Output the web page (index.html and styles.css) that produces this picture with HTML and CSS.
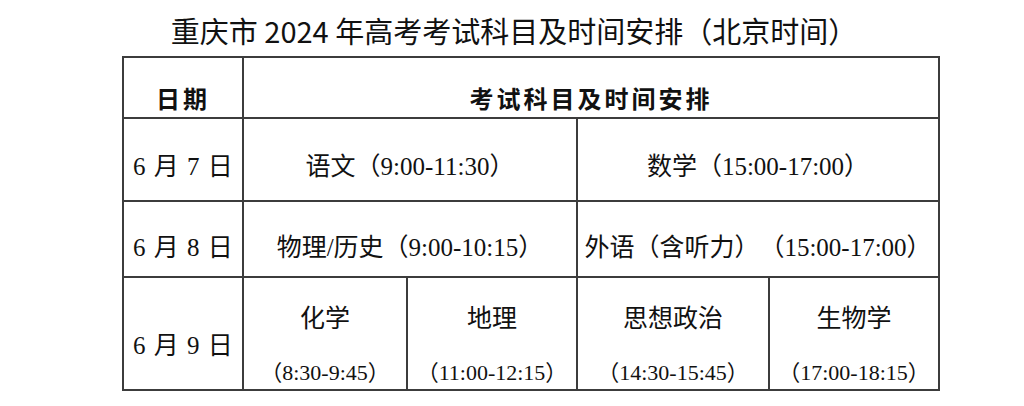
FILE: index.html
```html
<!DOCTYPE html>
<html lang="zh-CN">
<head>
<meta charset="utf-8">
<title>重庆市2024年高考考试科目及时间安排</title>
<link rel="stylesheet" href="styles.css">
</head>
<body>
<div class="page">
  <h1 class="title">重庆市 2024 年高考考试科目及时间安排（北京时间）</h1>
  <div class="table-wrap">
    <table class="schedule">
      <colgroup>
        <col class="c-date">
        <col class="c-a">
        <col class="c-b">
        <col class="c-c">
        <col class="c-d">
      </colgroup>
      <tr class="r-head">
        <th>日期</th>
        <th colspan="4">考试科目及时间安排</th>
      </tr>
      <tr class="r-1">
        <td class="date">6 月 7 日</td>
        <td colspan="2">语文（9:00-11:30）</td>
        <td colspan="2">数学（15:00-17:00）</td>
      </tr>
      <tr class="r-2">
        <td class="date">6 月 8 日</td>
        <td colspan="2">物理/历史（9:00-10:15）</td>
        <td colspan="2">外语（含听力）　（15:00-17:00）</td>
      </tr>
      <tr class="r-3">
        <td class="date">6 月 9 日</td>
        <td class="split"><div class="subj">化学</div><div class="time">（8:30-9:45）</div></td>
        <td class="split"><div class="subj">地理</div><div class="time">（11:00-12:15）</div></td>
        <td class="split"><div class="subj">思想政治</div><div class="time">（14:30-15:45）</div></td>
        <td class="split"><div class="subj">生物学</div><div class="time">（17:00-18:15）</div></td>
      </tr>
    </table>
  </div>
</div>
</body>
</html>
```

FILE: styles.css
```css
html, body {
  margin: 0;
  padding: 0;
  background: #ffffff;
}

.page {
  width: 1024px;
  height: 406px;
  overflow: hidden;
}

.title {
  margin: 0;
  height: 56px;
  padding-top: 10px;
  box-sizing: border-box;
  text-align: center;
  font-family: "Noto Sans CJK SC", "Noto Sans", sans-serif;
  font-weight: 400;
  font-size: 29px;
  line-height: 40px;
  color: #111;
  padding-left: 4px;
}

.table-wrap {
  padding-left: 122px;
}

.schedule {
  border-collapse: collapse;
  table-layout: fixed;
  width: 818px;
  color: #111;
  font-family: "Liberation Serif", "Noto Sans CJK SC", serif;
  font-size: 25px;
}

.c-date { width: 120px; }
.c-a { width: 164px; }
.c-b { width: 170px; }
.c-c { width: 192px; }
.c-d { width: 170px; }

.schedule th,
.schedule td {
  border: 2px solid #3c3c3c;
  padding: 0;
  text-align: center;
  vertical-align: middle;
  white-space: nowrap;
  line-height: 32px;
}

.schedule th {
  font-family: "Noto Sans CJK SC", sans-serif;
  font-weight: 700;
  font-size: 24px;
  letter-spacing: 3px;
}

.schedule td.date {
  word-spacing: 2px;
}

.r-head { height: 61px; }
.r-head th { padding-top: 20px; }

.r-1 { height: 83px; }
.r-1 td { padding-top: 14px; }

.r-2 { height: 76px; }
.r-2 td { padding-top: 18px; }

.r-3 { height: 112px; }
.r-3 td.date { padding-top: 24px; }

.r-3 td.split {
  vertical-align: top;
}

.subj {
  margin-top: 22px;
  font-family: "Noto Sans CJK SC", sans-serif;
}

.time {
  margin-top: 25px;
  font-size: 22px;
}
```
